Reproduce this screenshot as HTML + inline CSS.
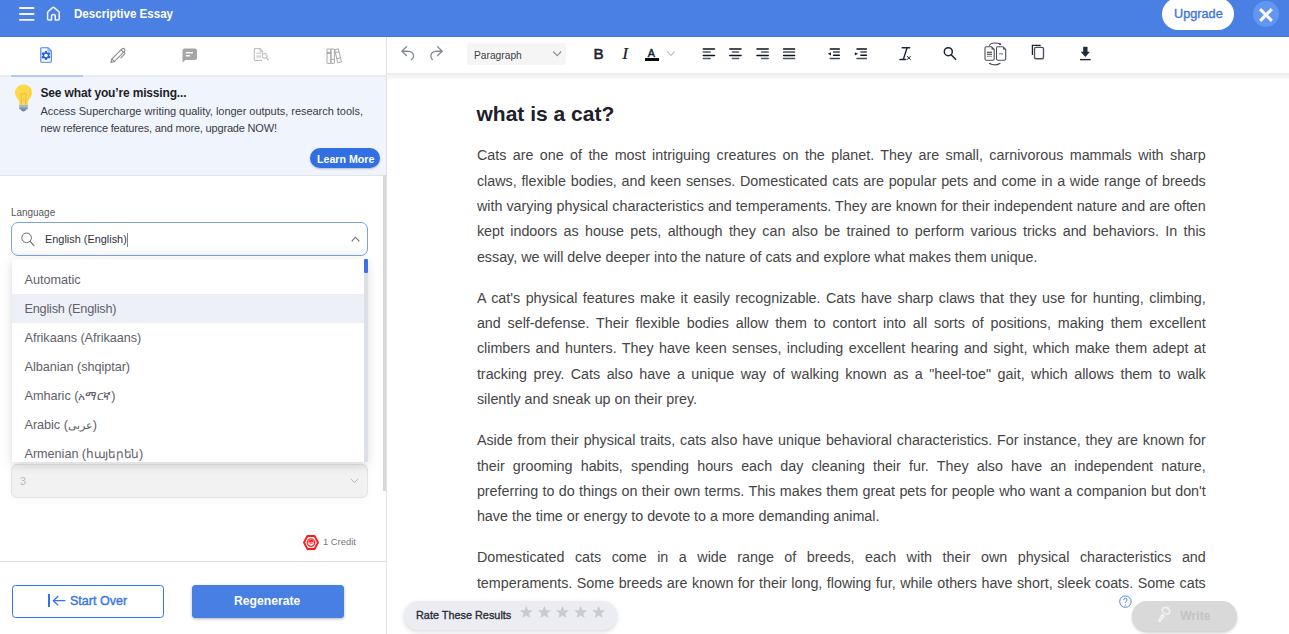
<!DOCTYPE html>
<html><head><meta charset="utf-8">
<style>
*{box-sizing:border-box;margin:0;padding:0}
html,body{width:1289px;height:634px;overflow:hidden;background:#fff;font-family:"Liberation Sans",sans-serif}
.a{position:absolute}
.t{position:absolute;white-space:nowrap;line-height:1}
svg{position:absolute;overflow:visible}
#topbar{left:0;top:0;width:1289px;height:37px;background:#4a80e3;border-bottom:1px solid #4277dc}
#side{left:0;top:37px;width:386px;height:597px;background:#fff}
#editor{left:386px;top:37px;width:903px;height:597px;background:#fff;border-left:1px solid #e3e3e3}
.p{position:absolute;left:476.9px;width:728.9px;font-size:14.32px;line-height:25.426px;color:#454545;text-align:justify}
.dd{position:absolute;left:12px;width:355px;height:29.2px}
.dd span{position:absolute;left:12.5px;top:7.5px;font-size:12.7px;letter-spacing:-0.05px;color:#616169;white-space:nowrap;line-height:15px}
</style></head><body>

<!-- TOP BAR -->
<div id="topbar" class="a"></div>
<svg style="left:19px;top:7px" width="16" height="14" viewBox="0 0 16 14"><g fill="#f4f6fb"><rect x="0" y="0.1" width="15.5" height="1.9" rx=".9"/><rect x="0" y="6.1" width="15.5" height="1.8" rx=".9"/><rect x="0" y="12" width="15.5" height="1.8" rx=".9"/></g></svg>
<svg style="left:46px;top:6px" width="15" height="15" viewBox="0 0 15 15"><path d="M1.6 6.6 Q1.6 6 2.2 5.5 L6.6 1.6 Q7.4 1 8.2 1.6 L12.6 5.5 Q13.2 6 13.2 6.6 V13.1 Q13.2 14 12.3 14 H9.3 V10.5 Q9.3 8.6 7.4 8.6 Q5.5 8.6 5.5 10.5 V14 H2.5 Q1.6 14 1.6 13.1 Z" fill="none" stroke="#f6f7fc" stroke-width="1.5" stroke-linejoin="round"/></svg>
<div class="t" style="left:74px;top:6.5px;font-size:13px;font-weight:bold;color:#fff;transform:scaleX(.89);transform-origin:0 0">Descriptive Essay</div>
<div class="a" style="left:1162px;top:-2px;width:72px;height:32px;border-radius:16px;background:#fff"></div>
<div class="t" style="left:1174.2px;top:7px;font-size:13.6px;color:#3d73df;-webkit-text-stroke:.35px #3d73df;transform:scaleX(.935);transform-origin:0 0">Upgrade</div>
<div class="a" style="left:1253px;top:1px;width:26px;height:26px;border-radius:13px;background:#6196f1"></div>
<svg style="left:1259px;top:8px" width="14" height="14" viewBox="0 0 14 14"><path d="M2.2 2.2 L11.8 11.8 M11.8 2.2 L2.2 11.8" stroke="#fff" stroke-width="3" stroke-linecap="square"/></svg>

<!-- SIDEBAR -->
<div id="side" class="a"></div>
<div class="a" style="left:0;top:75px;width:386px;height:2px;background:#ececec"></div>
<div class="a" style="left:11px;top:75px;width:72px;height:2px;background:#b6c9f6"></div>
<!-- tab icons -->
<svg style="left:40px;top:47px" width="13" height="16" viewBox="0 0 13 16"><path d="M1.8 0.7 H8 L11.3 4 V14.2 Q11.3 15.2 10.3 15.2 H1.8 Q0.8 15.2 0.8 14.2 V1.7 Q0.8 0.7 1.8 0.7 Z" fill="none" stroke="#4a80ef" stroke-width="1.15"/><path d="M8 0.7 V4 H11.3" fill="none" stroke="#4a80ef" stroke-width="0.8"/><g transform="translate(6 8.4)" fill="#2563e8"><circle r="3.2"/><g id="gt"><rect x="-1.25" y="-4.7" width="2.5" height="9.4" rx="1.1"/></g><rect x="-1.25" y="-4.7" width="2.5" height="9.4" rx="1.1" transform="rotate(60)"/><rect x="-1.25" y="-4.7" width="2.5" height="9.4" rx="1.1" transform="rotate(120)"/></g><circle cx="6" cy="8.4" r="1.75" fill="#fff"/></svg>
<svg style="left:110px;top:47px" width="17" height="17" viewBox="0 0 17 17"><g fill="none" stroke="#8c8c8c" stroke-width="1.1" stroke-linejoin="round" stroke-linecap="round"><path d="M1.73 12.13 L11.93 1.93 A1.8 1.8 0 0 1 14.47 4.47 L4.27 14.67 L0.9 15.5 Z"/><path d="M1.9 12.2 L4.2 14.5"/><path d="M11.1 2.8 L13.6 5.3"/><path d="M14.6 5.6 Q15.4 6.4 14.6 7.2 L10.9 10.9"/></g></svg>
<svg style="left:182px;top:48px" width="16" height="16" viewBox="0 0 16 16"><path d="M2.6 0.5 H12.9 Q15 0.5 15 2.6 V9.9 Q15 12 12.9 12 H3.4 L0.5 14.6 V2.6 Q0.5 0.5 2.6 0.5 Z" fill="#a5a5a5"/><rect x="3.7" y="4" width="7.2" height="1.5" rx=".3" fill="#fff"/><rect x="3.7" y="7.1" width="4.2" height="1.5" rx=".3" fill="#fff"/></svg>
<svg style="left:253px;top:47px" width="18" height="16" viewBox="0 0 18 16"><g fill="none" stroke="#bdbdbd" stroke-width="1.05" stroke-linejoin="round"><path d="M9.6 6.4 V4.2 L7 1.5 H2.2 Q1.3 1.5 1.3 2.4 V12.7 Q1.3 13.5 2.2 13.5 H9.2"/><path d="M7 1.5 V4.2 H9.6"/><circle cx="11.7" cy="8.8" r="2.4"/><path d="M13.4 10.6 L15.6 13.3" stroke-width="1.3"/><path d="M3.5 6.2 H8.4"/></g><rect x="3.5" y="8.3" width="4.4" height="2.6" fill="#d6d6d6"/></svg>
<svg style="left:325.6px;top:47.5px" width="17" height="17" viewBox="0 0 17 17"><g fill="none" stroke="#a3a3a3" stroke-width="0.95" stroke-linejoin="round"><rect x="1" y="1" width="3.9" height="14.4" rx=".5"/><rect x="4.9" y="1" width="3.5" height="14.4" rx=".5"/><path d="M8.7 1.6 L12.4 0.9 L15.4 13.9 L11.7 14.8 Z"/><path d="M1 4.3 H4.9 M1 5.5 H4.9 M4.9 11.3 H8.4 M9.4 4.6 L13 3.9 M11 10.6 L14.6 9.8"/></g></svg>

<!-- banner -->
<div class="a" style="left:0;top:77px;width:386px;height:99px;background:#f0f5fd;border-bottom:1.3px solid #e3e4e8"></div>
<svg style="left:14px;top:84px" width="19" height="28" viewBox="0 0 19 28"><path d="M9.5 0.5 C4.5 0.5 1 4.2 1 8.8 C1 11.8 2.6 13.8 4 15.6 C5.2 17.2 5.3 19 5.3 21 H13.7 C13.7 19 13.8 17.2 15 15.6 C16.4 13.8 18 11.8 18 8.8 C18 4.2 14.5 0.5 9.5 0.5 Z" fill="#fed948"/><path d="M14 2 C16.6 3.8 17.5 7 16.8 10 C16 13 14.4 14.6 13.7 17 L13.4 21 H11.5 C12 17 13.5 14.5 15 12 C16 9 15.6 5 14 2 Z" fill="#f9c93a" opacity=".6"/><path d="M7.4 20.5 L7 12.2 M11.6 20.5 L12 12.2 M7 12.2 Q6 10 7.4 9.4 Q8.6 9 9.5 11 Q10.4 9 11.6 9.4 Q13 10 12 12.2" fill="none" stroke="#f4a447" stroke-width="0.75"/><rect x="5" y="21" width="9" height="2.4" fill="#a7b7d8"/><rect x="5.3" y="23.3" width="8.4" height="2" fill="#7f8fae"/><path d="M6.5 25.3 H12.5 Q11.8 27.4 9.5 27.4 Q7.2 27.4 6.5 25.3 Z" fill="#6b7a98"/></svg>
<div class="t" style="left:40.5px;top:87px;font-size:12px;font-weight:bold;color:#1e1e28;letter-spacing:-0.16px">See what you’re missing...</div>
<div class="t" style="left:40.5px;top:105.6px;font-size:11px;color:#3b3b45;letter-spacing:-0.03px">Access Supercharge writing quality, longer outputs, research tools,</div>
<div class="t" style="left:40.5px;top:122.6px;font-size:11px;color:#3b3b45;letter-spacing:-0.18px">new reference features, and more, upgrade NOW!</div>
<div class="a" style="left:310px;top:148px;width:70px;height:20.3px;border-radius:10.2px;background:#316fe3;box-shadow:0 1px 2px rgba(0,0,0,.25)"></div>
<div class="t" style="left:316.8px;top:152.5px;font-size:11.7px;font-weight:bold;color:#fff;transform:scaleX(.91);transform-origin:0 0">Learn More</div>

<!-- form -->
<div class="t" style="left:11px;top:207px;font-size:10.5px;color:#55555c;transform:scaleX(.945);transform-origin:0 0">Language</div>
<div class="a" style="left:11px;top:222px;width:357px;height:34px;border:1.2px solid #7aa0ee;border-radius:7px;background:linear-gradient(#fff 60%,#f8f8f8)"></div>
<svg style="left:21px;top:232px" width="14" height="15" viewBox="0 0 14 15"><circle cx="5.6" cy="5.8" r="4.8" fill="none" stroke="#6a6a72" stroke-width="1"/><path d="M9.1 9.4 L13 13.6" stroke="#6a6a72" stroke-width="1.1" stroke-linecap="round"/></svg>
<div class="t" style="left:45px;top:233px;font-size:11.6px;color:#30303a;transform:scaleX(.94);transform-origin:0 0">English (English)</div>
<div class="a" style="left:126.6px;top:233px;width:1px;height:13.5px;background:#8a8a8a"></div>
<svg style="left:351px;top:236px" width="9" height="6" viewBox="0 0 9 6"><path d="M0.7 5.3 L4.5 1.2 L8.3 5.3" fill="none" stroke="#6a6a70" stroke-width="1.1"/></svg>

<!-- underlying hints -->
<div class="a" style="left:11px;top:464px;width:357px;height:33.5px;border:1px solid #e3e3e3;border-radius:6px;background:#f2f2f2;box-shadow:0 2px 6px rgba(0,0,0,.04)"></div>
<div class="t" style="left:20px;top:475.5px;font-size:11px;color:#bdbdbd">3</div>
<svg style="left:350px;top:477.5px" width="9" height="6" viewBox="0 0 9 6"><path d="M0.7 0.8 L4.5 4.6 L8.3 0.8" fill="none" stroke="#b5b5b5" stroke-width="1"/></svg>

<!-- dropdown -->
<div class="a" style="left:12px;top:258.5px;width:355px;height:203px;background:#fff;box-shadow:0 3px 10px rgba(0,0,0,.16)"></div>
<div class="dd" style="top:265px"><span>Automatic</span></div>
<div class="dd" style="top:294.1px;background:#eef0f8"><span style="letter-spacing:-0.2px">English (English)</span></div>
<div class="dd" style="top:323.3px"><span>Afrikaans (Afrikaans)</span></div>
<div class="dd" style="top:352.4px"><span>Albanian (shqiptar)</span></div>
<div class="dd" style="top:381.5px"><span>Amharic (<span style="position:static;font-size:12px;letter-spacing:-0.3px">አማርኛ</span>)</span></div>
<div class="dd" style="top:410.6px"><span>Arabic (<span style="position:static;font-size:11px;letter-spacing:0">عربى</span>)</span></div>
<div class="a" style="left:12px;top:439px;width:355px;height:22.5px;overflow:hidden"><div class="dd" style="left:0;top:0.8px"><span>Armenian (<span style="position:static;font-size:12.2px;letter-spacing:-0.3px">հայերեն</span>)</span></div></div>
<div class="a" style="left:364px;top:258.5px;width:3.5px;height:203px;background:#dde1e7"></div>
<div class="a" style="left:364px;top:258.5px;width:3.5px;height:14.5px;background:#3c72e6;border-radius:1px"></div>

<!-- credit -->
<svg style="left:302.5px;top:535px" width="16" height="15" viewBox="0 0 16 15"><path d="M4.4 1 H11.6 L15 7.5 L11.6 14 H4.4 L1 7.5 Z" fill="#fff" stroke="#ff1a1a" stroke-width="1.9" stroke-linejoin="round"/><circle cx="8" cy="7.6" r="3.7" fill="none" stroke="#ff2a2a" stroke-width="1.3"/><path d="M5.2 7.4 Q5.6 4.6 8 4.6 Q10.4 4.6 10.8 7.4 Z" fill="#ff2a2a"/><path d="M6.3 8.6 H9.7" stroke="#ff5a5a" stroke-width=".9"/></svg>
<div class="t" style="left:323px;top:536.8px;font-size:9.9px;color:#75757c;transform:scaleX(.95);transform-origin:0 0">1 Credit</div>
<div class="a" style="left:0;top:561px;width:386px;height:1px;background:#dedede"></div>

<!-- buttons -->
<div class="a" style="left:12px;top:585px;width:152px;height:33px;border:1.8px solid #3272e4;border-radius:3.5px"></div>
<div class="a" style="left:47.5px;top:594px;width:2.2px;height:13.3px;background:#3474e2"></div>
<svg style="left:52px;top:595px" width="14" height="12" viewBox="0 0 14 12"><path d="M13.4 5.7 H1.6 M6.2 1 L1.3 5.7 L6.2 10.4" fill="none" stroke="#3474e2" stroke-width="1.3"/></svg>
<div class="t" style="left:69.5px;top:594px;font-size:13px;color:#3a75e3;-webkit-text-stroke:.4px #3a75e3;transform:scaleX(.965);transform-origin:0 0">Start Over</div>
<div class="a" style="left:191.5px;top:585px;width:152px;height:33px;border-radius:3.5px;background:#477fe3;box-shadow:0 1px 3px rgba(0,0,0,.3)"></div>
<div class="t" style="left:233.6px;top:594px;font-size:13px;font-weight:bold;color:#fff;transform:scaleX(.935);transform-origin:0 0">Regenerate</div>

<!-- sidebar scrollbar -->
<div class="a" style="left:383px;top:175px;width:3px;height:316px;background:#d8d8d8"></div>

<!-- EDITOR -->
<div id="editor" class="a"></div>
<div class="a" style="left:387px;top:73px;width:902px;height:8px;background:linear-gradient(#ececec,rgba(255,255,255,0))"></div>
<div class="a" style="left:467px;top:43px;width:99px;height:21.5px;background:#f5f5f5;border-radius:3px"></div>
<div class="t" style="left:473.8px;top:49.6px;font-size:11.5px;color:#3c3c46;transform:scaleX(.89);transform-origin:0 0">Paragraph</div>
<!-- toolbar icons -->
<svg style="left:400px;top:45px" width="16" height="16" viewBox="0 0 16 16"><path d="M6.5 1.8 L1.8 6.2 L6.5 10.6 M1.8 6.2 H7.5 C11 6.2 13.6 8.3 13.6 11 C13.6 12.6 12.9 13.8 11.4 14.6" fill="none" stroke="#858b96" stroke-width="1.35" stroke-linecap="round" stroke-linejoin="round"/></svg>
<svg style="left:429px;top:45px" width="16" height="16" viewBox="0 0 16 16"><path d="M8.6 1.8 L13.3 6.2 L8.6 10.6 M13.3 6.2 H7.6 C4.1 6.2 1.9 8.3 1.9 11 C1.9 12.6 2.4 13.8 3.4 14.6" fill="none" stroke="#858b96" stroke-width="1.35" stroke-linecap="round" stroke-linejoin="round"/></svg>
<svg style="left:552px;top:50px" width="11" height="8" viewBox="0 0 11 8"><path d="M1.2 1.5 L5.2 5.6 L9.2 1.5" fill="none" stroke="#8a8f98" stroke-width="1.1"/></svg>
<div class="t" style="left:593.6px;top:46.4px;font-size:15.2px;color:#1d2230;-webkit-text-stroke:.55px #1d2230">B</div>
<div class="t" style="left:622.2px;top:45px;font-size:17.5px;font-style:italic;font-family:'Liberation Serif',serif;color:#1d2230;-webkit-text-stroke:.2px #1d2230">I</div>
<div class="t" style="left:647.8px;top:48px;font-size:10.8px;color:#1d2840;-webkit-text-stroke:.5px #1d2840">A</div>
<div class="a" style="left:645.2px;top:58.3px;width:13.6px;height:2.6px;background:#0a0a0a"></div>
<svg style="left:666px;top:50px" width="10" height="8" viewBox="0 0 10 8"><path d="M1.2 1.5 L4.9 5.6 L8.6 1.5" fill="none" stroke="#9aa0a8" stroke-width="1"/></svg>
<svg style="left:702px;top:48px" width="100" height="12" viewBox="0 0 100 12"><g stroke-width="1.5" stroke-linecap="round">
<path d="M1.3 1.1 H12.5 M1.3 7.4 H12.5" stroke="#111"/><path d="M1.3 4.1 H8.2 M1.3 10.6 H8.2" stroke="#4b5a6b"/>
<path d="M27.8 1.1 H39 M27.8 7.4 H39" stroke="#111"/><path d="M30.4 4.1 H36.6 M30.4 10.6 H36.6" stroke="#4b5a6b"/>
<path d="M55 1.1 H66.2 M55 7.4 H66.2" stroke="#111"/><path d="M59.6 4.1 H66.2 M59.6 10.6 H66.2" stroke="#4b5a6b"/>
<path d="M81.6 1.1 H92.6 M81.6 7.4 H92.6" stroke="#111"/><path d="M81.6 4.1 H92.6 M81.6 10.6 H92.6" stroke="#44536a"/>
</g></svg>
<svg style="left:826px;top:48px" width="44" height="12" viewBox="0 0 44 12"><g stroke-width="1.5" stroke-linecap="round">
<path d="M4.3 1.1 H13.3 M7.6 7.3 H13.3" stroke="#111"/><path d="M7.6 4.1 H13.3 M4.3 10.5 H13.3" stroke="#3f4a5c"/><path d="M5 4.2 L1.7 5.8 L5 7.4 Z" fill="#1a2235" stroke="none"/>
<path d="M31 1.1 H40.4 M34.9 7.3 H40.4" stroke="#111"/><path d="M34.9 4.1 H40.4 M31 10.5 H40.4" stroke="#3f4a5c"/><path d="M28.8 4.2 L32.1 5.8 L28.8 7.4 Z" fill="#1a2235" stroke="none"/>
</g></svg>
<svg style="left:898px;top:46px" width="16" height="16" viewBox="0 0 16 16"><g fill="none" stroke="#1d2435" stroke-linecap="round"><path d="M4.3 1.8 H11.6" stroke-width="1.6"/><path d="M8.9 2.3 L5.6 12.6" stroke-width="1.4"/><path d="M2 13.5 H7.7" stroke-width="1.3"/><path d="M9.4 10.4 L12.3 13.4 M12.3 10.4 L9.4 13.4" stroke-width="1"/></g></svg>
<svg style="left:942px;top:46px" width="16" height="16" viewBox="0 0 16 16"><circle cx="6.3" cy="5.7" r="4" fill="none" stroke="#1d2435" stroke-width="1.5"/><path d="M9.2 8.8 L13.6 13.2" stroke="#1d2435" stroke-width="1.6" stroke-linecap="round"/></svg>
<svg style="left:983px;top:41px" width="25" height="26" viewBox="0 0 25 26"><g fill="none" stroke="#4a4f5a" stroke-width="1.1" stroke-linejoin="round">
<path d="M3 5.7 H8.4 L11.2 8.5 V17.8 Q11.2 19.3 9.7 19.3 H3.5 Q2 19.3 2 17.8 V7.2 Q2 5.7 3 5.7 Z"/><path d="M14.5 5.7 H19.9 L22.7 8.5 V17.8 Q22.7 19.3 21.2 19.3 H15 Q13.5 19.3 13.5 17.8 V7.2 Q13.5 5.7 14.5 5.7 Z"/>
<path d="M6.3 4.8 Q7.5 2 11.5 2 Q15.5 2 17.5 3.2" stroke-width="1.2"/><path d="M6.6 22.4 Q9 23.8 12 23.8 Q15.6 23.8 17.5 21.8" stroke-width="1.2"/>
<path d="M4 11.3 H9 M4 13.3 H9" stroke="#333"/><path d="M4 15.3 H9" stroke="#999"/><path d="M16 12.8 H20" stroke="#777"/></g>
<path d="M8.6 5.7 L11.2 8.5 L8.6 8.5 Z M20.1 5.7 L22.7 8.5 L20.1 8.5 Z" fill="#4a4f5a"/><path d="M16.8 1.6 L18.4 3.4 L16.2 4.2 Z" fill="#333"/><path d="M7.4 21.6 L5.8 22.6 L7.6 23.6 Z" fill="#333"/></svg>
<svg style="left:1031px;top:44px" width="14" height="16" viewBox="0 0 14 16"><path d="M1.4 10.9 V1.4 H9.7" fill="none" stroke="#222" stroke-width="1.25"/><rect x="3.5" y="3.3" width="9" height="11.4" rx="1.5" fill="none" stroke="#4a4f5e" stroke-width="1.35"/></svg>
<svg style="left:1079px;top:46px" width="13" height="15" viewBox="0 0 13 15"><path d="M4.2 0.7 H8.5 V5.7 H11 L6.35 10.9 L1.6 5.7 H4.2 Z" fill="#1f2a3b"/><rect x="1" y="12.9" width="10.7" height="1.4" fill="#1f2a3b"/></svg>


<div class="t" style="left:476.5px;top:101.7px;font-size:21px;font-weight:bold;color:#20202a;line-height:24px">what is a cat?</div>
<div class="p" style="top:143.1px">Cats are one of the most intriguing creatures on the planet. They are small, carnivorous mammals with sharp claws, flexible bodies, and keen senses. Domesticated cats are popular pets and come in a wide range of breeds with varying physical characteristics and temperaments. They are known for their independent nature and are often kept indoors as house pets, although they can also be trained to perform various tricks and behaviors. In this essay, we will delve deeper into the nature of cats and explore what makes them unique.</div>
<div class="p" style="top:285.6px">A cat's physical features make it easily recognizable. Cats have sharp claws that they use for hunting, climbing, and self-defense. Their flexible bodies allow them to contort into all sorts of positions, making them excellent climbers and hunters. They have keen senses, including excellent hearing and sight, which make them adept at tracking prey. Cats also have a unique way of walking known as a "heel-toe" gait, which allows them to walk silently and sneak up on their prey.</div>
<div class="p" style="top:428.1px">Aside from their physical traits, cats also have unique behavioral characteristics. For instance, they are known for their grooming habits, spending hours each day cleaning their fur. They also have an independent nature, preferring to do things on their own terms. This makes them great pets for people who want a companion but don't have the time or energy to devote to a more demanding animal.</div>
<div class="p" style="top:545.1px">Domesticated cats come in a wide range of breeds, each with their own physical characteristics and temperaments. Some breeds are known for their long, flowing fur, while others have short, sleek coats. Some cats also have distinctive markings or patterns on their fur that make them stand out from other breeds.</div>

<div class="a" style="left:387px;top:596px;width:902px;height:38px;background:#fff"></div>
<!-- rate pill -->
<div class="a" style="left:404px;top:601px;width:213px;height:29px;border-radius:14.5px;background:#ebedf2;box-shadow:0 2px 5px rgba(0,0,0,.15)"></div>
<div class="t" style="left:416.3px;top:609px;font-size:11.7px;color:#2c2c36;-webkit-text-stroke:.35px #2c2c36;transform:scaleX(.93);transform-origin:0 0">Rate These Results</div>
<svg style="left:0;top:0" width="1289" height="634" viewBox="0 0 1289 634"><path transform="translate(526.3 612.5) scale(1.12)" d="M0 -6 L1.55 -1.95 L5.8 -1.9 L2.5 0.8 L3.6 5 L0 2.6 L-3.6 5 L-2.5 0.8 L-5.8 -1.9 L-1.55 -1.95 Z" fill="#cbcbcd"/><path transform="translate(544.4 612.5) scale(1.12)" d="M0 -6 L1.55 -1.95 L5.8 -1.9 L2.5 0.8 L3.6 5 L0 2.6 L-3.6 5 L-2.5 0.8 L-5.8 -1.9 L-1.55 -1.95 Z" fill="#cbcbcd"/><path transform="translate(562.5 612.5) scale(1.12)" d="M0 -6 L1.55 -1.95 L5.8 -1.9 L2.5 0.8 L3.6 5 L0 2.6 L-3.6 5 L-2.5 0.8 L-5.8 -1.9 L-1.55 -1.95 Z" fill="#cbcbcd"/><path transform="translate(580.6 612.5) scale(1.12)" d="M0 -6 L1.55 -1.95 L5.8 -1.9 L2.5 0.8 L3.6 5 L0 2.6 L-3.6 5 L-2.5 0.8 L-5.8 -1.9 L-1.55 -1.95 Z" fill="#cbcbcd"/><path transform="translate(598.7 612.5) scale(1.12)" d="M0 -6 L1.55 -1.95 L5.8 -1.9 L2.5 0.8 L3.6 5 L0 2.6 L-3.6 5 L-2.5 0.8 L-5.8 -1.9 L-1.55 -1.95 Z" fill="#cbcbcd"/></svg>
<!-- help + write -->
<svg style="left:1119px;top:595px" width="14" height="14" viewBox="0 0 14 14"><circle cx="6.4" cy="6.6" r="5.7" fill="#fff" stroke="#4a85f0" stroke-width="1"/><path d="M4.7 5.1 Q4.7 3.3 6.4 3.3 Q8.1 3.3 8.1 4.8 Q8.1 5.9 7.1 6.5 Q6.4 6.9 6.4 8" fill="none" stroke="#4a85f0" stroke-width="1"/><circle cx="6.4" cy="9.9" r=".65" fill="#4a85f0"/></svg>
<div class="a" style="left:1132px;top:601px;width:105px;height:30px;border-radius:15px;background:#d9d9d9;box-shadow:0 2px 3px rgba(0,0,0,.2)"></div>
<svg style="left:1157px;top:606px" width="15" height="17" viewBox="0 0 15 17"><ellipse cx="9" cy="4.7" rx="3.9" ry="3" transform="rotate(35 9 4.7)" fill="none" stroke="#f2f2f2" stroke-width="1.6"/><path d="M4.9 7.6 L8.1 10.1 L3.2 15.9 Q2.4 16.4 1.5 15.8 Q0.8 15.1 1.2 14.3 Z" fill="#f2f2f2"/><path d="M5.6 10 L3 13.3" stroke="#dedede" stroke-width=".7"/><path d="M10.6 0.8 L11.9 1.6" stroke="#ececec" stroke-width="1.1"/></svg>
<div class="t" style="left:1180.3px;top:609.6px;font-size:12.2px;font-weight:bold;color:#c3c3c3">Write</div>
</body></html>
